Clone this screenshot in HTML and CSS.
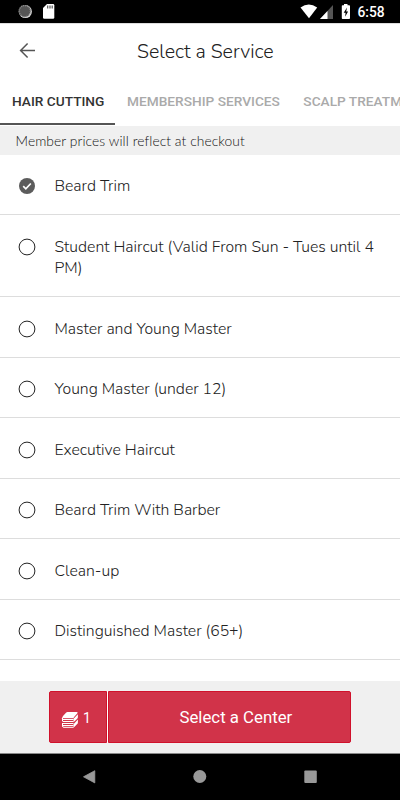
FILE: index.html
```html
<!DOCTYPE html>
<html lang="en">
<head>
<meta charset="utf-8">
<meta name="viewport" content="width=device-width">
<title>Select a Service</title>
<link rel="stylesheet" href="styles.css">
</head>
<body>
<div class="phone">
  <div class="status">
    <svg class="status-icons" width="60" height="23" viewBox="0 0 60 23">
      <circle cx="25.400" cy="11.600" r="6.500" fill="#ddd"/>
      <circle cx="24.600" cy="10.900" r="6" fill="#555"/>
      <circle cx="24.800" cy="11.200" r="5.600" fill="none" stroke="#8c8c8c" stroke-width="1.400" stroke-dasharray="1 1"/>
      <path d="M47 4h6q1.300 0 1.300 1.300v12.200q0 1.300-1.300 1.300h-8.700q-1.300 0-1.300-1.300V8z" fill="#fff"/>
      <path d="M47.700 5.500v3M50 5.500v3M52.200 5.500v3" stroke="#555" stroke-width="1.200"/>
    </svg>
    <svg class="status-icons" width="56" height="23" viewBox="300 0 56 23">
      <path d="M300.500 7.400Q308.800 1.800 317.200 7.400L309 18.200z" fill="#fff"/>
      <path d="M333 5v14h-13z" fill="#555"/>
      <path d="M327.500 10.900V19H320z" fill="#fff"/>
      <path d="M344 4h3.500v1.300h1.700q.8 0 .8.800v12q0 .9-.8.900h-6.600q-.8 0-.8-.9v-12q0-.8.800-.8H344z" fill="#fff"/>
      <path d="M347 7.500l-3.300 5.200h1.900l-.5 4 3-5.200h-1.900z" fill="#000"/>
    </svg>
    <span class="clock">6:58</span>
  </div>
  <header class="header">
    <svg class="back" width="17" height="17" viewBox="0 0 17 17"><path d="M16 8.500H2M8.600 1.500L1.600 8.500l7 7" fill="none" stroke="#555" stroke-width="1.500"/></svg>
    <h1 class="title">Select a Service</h1>
  </header>
  <nav class="tabs">
    <span class="tab active">HAIR CUTTING</span>
    <span class="tab">MEMBERSHIP SERVICES</span>
    <span class="tab">SCALP TREATMENT</span>
  </nav>
  <p class="notice">Member prices will reflect at checkout</p>
  <ul class="list">
    <li class="row first"><svg class="radio" width="18" height="18" viewBox="0 0 18 18"><circle cx="9" cy="9" r="8" fill="#5c5c5c"/><path d="M5.200 9.200l2.600 2.600 5-5.300" fill="none" stroke="#fff" stroke-width="1.700"/></svg><span class="label">Beard Trim</span></li>
    <li class="row tall"><svg class="radio" width="18" height="18" viewBox="0 0 18 18"><circle class="ring" cx="9" cy="9" r="7.900"/></svg><span class="label">Student Haircut (Valid From Sun - Tues until 4<br>PM)</span></li>
    <li class="row"><svg class="radio" width="18" height="18" viewBox="0 0 18 18"><circle class="ring" cx="9" cy="9" r="7.900"/></svg><span class="label">Master and Young Master</span></li>
    <li class="row"><svg class="radio" width="18" height="18" viewBox="0 0 18 18"><circle class="ring" cx="9" cy="9" r="7.900"/></svg><span class="label">Young Master (under 12)</span></li>
    <li class="row"><svg class="radio" width="18" height="18" viewBox="0 0 18 18"><circle class="ring" cx="9" cy="9" r="7.900"/></svg><span class="label">Executive Haircut</span></li>
    <li class="row"><svg class="radio" width="18" height="18" viewBox="0 0 18 18"><circle class="ring" cx="9" cy="9" r="7.900"/></svg><span class="label">Beard Trim With Barber</span></li>
    <li class="row"><svg class="radio" width="18" height="18" viewBox="0 0 18 18"><circle class="ring" cx="9" cy="9" r="7.900"/></svg><span class="label">Clean-up</span></li>
    <li class="row"><svg class="radio" width="18" height="18" viewBox="0 0 18 18"><circle class="ring" cx="9" cy="9" r="7.900"/></svg><span class="label">Distinguished Master (65+)</span></li>
  </ul>
  <footer class="footer">
    <div class="actions">
      <div class="count">
        <svg width="18" height="18" viewBox="0 0 18 18">
          <path d="M6.500 1h9q1.800 0 .9 1.300L12.200 7H2Q1 6.300 2 5.100L5 1.700Q5.600 1 6.500 1z" fill="#fff"/>
          <path d="M16.900 3.200v2.900q0 1-.7 1.700L12.500 11.300V7.800zM16.900 8.500v2.900q0 1-.7 1.700L12.500 16.700v-3.500z" fill="#fff"/>
          <path d="M12.500 6.700H2.500Q1.200 6.700 1.200 7.600M2 8.500H12.500M2 10.500H12.500M1.500 12.500H12.500M1.500 14.500H12.500M2.500 16.300H12.500M1.500 6.500v4M1.500 12v3q0 1.300 1.300 1.300" fill="none" stroke="#fff" stroke-width="1"/>
        </svg>
        <span>1</span>
      </div>
      <div class="cta">Select a Center</div>
    </div>
  </footer>
  <div class="navbar">
    <svg width="400" height="46" viewBox="0 0 400 46">
      <path d="M94.800 16.700v12.200L83.500 22.800z" fill="#999" stroke="#999" stroke-width=".8" stroke-linejoin="round"/>
      <circle cx="199.800" cy="22.500" r="6.500" fill="#999"/>
      <rect x="304.300" y="16.500" width="12.500" height="12.500" rx="1" fill="#999"/>
    </svg>
  </div>
</div>
</body>
</html>
```
FILE: styles.css
```css
* { box-sizing: border-box; }
body { margin: 0; background: #fff; }
.phone {
  width: 400px;
  height: 800px;
  overflow: hidden;
  display: flex;
  flex-direction: column;
  font-family: Nunito, "Open Sans", sans-serif;
  font-weight: 300;
  color: #222;
}
.status {
  height: 23px;
  flex: none;
  display: flex;
  background: #000;
}
.status-icons { flex: none; }
.status-icons + .status-icons { margin-left: 240px; }
.clock {
  margin-left: 1.500px;
  font: 500 13.800px/25px Roboto, sans-serif;
  color: #fff;
}
.header {
  height: 57px;
  flex: none;
  display: flex;
  align-items: center;
  border-top: 1px solid #ddd;
}
.back { margin: -3px 0 0 19px; flex: none; }
.title {
  margin: 0 0 0 101px;
  font-size: 19.600px;
  font-weight: 300;
  line-height: 28px;
  white-space: nowrap;
}
.tabs {
  height: 46px;
  flex: none;
  display: flex;
  overflow: hidden;
  font: 500 13.700px/43px Roboto, sans-serif;
  color: #aaa;
}
.tab {
  flex: none;
  height: 45px;
  padding: 0 11.500px 0 12px;
  white-space: nowrap;
}
.tab.active { width: 115px; color: #333; border-bottom: 2px solid #555; }
.notice {
  height: 29px;
  flex: none;
  margin: 0;
  padding-left: 15.500px;
  background: #f0f0f0;
  font: 300 13.800px/29px Lato, sans-serif;
  letter-spacing: .08px;
  font-variant-ligatures: common-ligatures;
  color: #111;
}
.list {
  flex: 1;
  min-height: 0;
  margin: 0;
  padding: 0;
  list-style: none;
}
.row {
  height: 60.550px;
  display: flex;
  align-items: flex-start;
  padding: 22.700px 0 0 18px;
  border-bottom: 1px solid #ddd;
}
.row.first { height: 60px; padding-top: 22px; }
.row.tall { height: 82px; }
.radio { flex: none; }
.ring { fill: none; stroke: #222; stroke-width: 1; }
.label {
  margin: -1px 0 0 18.500px;
  font-size: 15.750px;
  line-height: 21.500px;
  white-space: nowrap;
}
.footer {
  height: 72px;
  flex: none;
  padding: 10px 49px 0;
  background: #f0f0f0;
}
.actions {
  height: 52px;
  display: flex;
  gap: 1px;
  background: #fff;
  border-radius: 2px;
  font: 400 16.800px/52px Roboto, sans-serif;
  color: #fff;
}
.count, .cta { background: #d13349; border: 1px solid #d0112b; line-height: 51px; }
.count {
  width: 58px;
  display: flex;
  align-items: center;
  gap: 4px;
  padding: 6px 0 0 11px;
  border-radius: 2px 0 0 2px;
  font-size: 14px;
}
.count span { margin-top: -3px; }
.cta { flex: 1; padding-left: 70.500px; border-radius: 0 2px 2px 0; }
.navbar { height: 47px; flex: none; background: #000; border-top: 1px solid #888; }
.navbar svg { display: block; }
```
